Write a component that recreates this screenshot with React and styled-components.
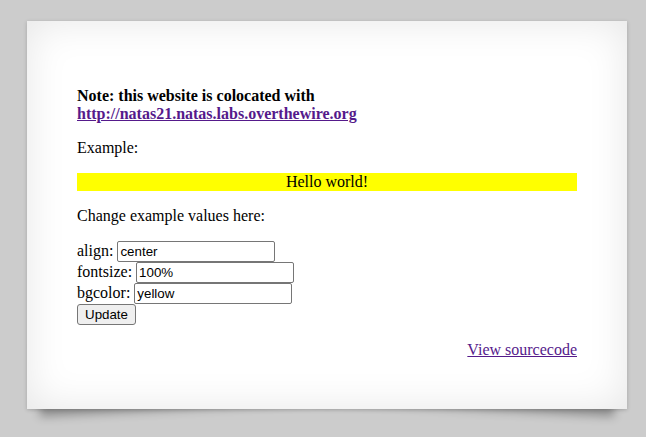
import React from "react";
import styled, { createGlobalStyle } from "styled-components";

const Global = createGlobalStyle`
  html { margin: 0; padding: 0; background: #ccc; }
  body {
    margin: 0;
    padding: 0;
    font-family: "Liberation Serif", "Times New Roman", serif;
    font-size: 16px;
    color: #000;
  }
`;

const Page = styled.div`
  padding: 21px 19px 28px 27px;
`;

const Card = styled.div`
  position: relative;
  width: 600px;
  box-sizing: border-box;
  background: #fff;
  padding: 50px;
  box-shadow: 0 1px 4px rgba(0, 0, 0, 0.2), 0 0 40px rgba(0, 0, 0, 0.1) inset;

  &::before,
  &::after {
    content: "";
    position: absolute;
    z-index: -1;
    bottom: 15px;
    width: 50%;
    height: 20%;
    max-width: 300px;
    box-shadow: 0 15px 10px rgba(0, 0, 0, 0.3);
  }
  &::before {
    left: 10px;
    transform: rotate(-3deg);
  }
  &::after {
    right: 10px;
    transform: rotate(3deg);
  }
`;

const Para = styled.p`
  margin: 16px 0;
  line-height: 18px;
  text-align: ${(p) => p.$align || "left"};
  &:last-child { margin-bottom: 0; }
`;

const Link = styled.a`
  color: #551a8b;
  text-decoration: underline;
`;

const Sample = styled.div`
  background: yellow;
  text-align: center;
  font-size: 100%;
  line-height: 18px;
  margin: 16px 0;
`;

const Form = styled.form`
  margin: 16px 0;
  display: flex;
  flex-direction: column;
  align-items: flex-start;
`;

const Row = styled.label`
  display: flex;
  align-items: baseline;
  gap: 4px;
  height: 21px;
  line-height: 18px;
`;

const Input = styled.input`
  box-sizing: border-box;
  width: 158px;
  height: 21px;
  padding: 1px 2px;
  border: 1px solid #767676;
  border-radius: 2px;
  font-family: "Liberation Sans", Arial, sans-serif;
  font-size: 13.333px;
  color: #000;
  background: #fff;
  outline: none;
`;

const Button = styled.button`
  box-sizing: border-box;
  width: 59px;
  height: 21px;
  padding: 1px 6px;
  border: 1px solid #767676;
  border-radius: 3px;
  background: #efefef;
  font-family: "Liberation Sans", Arial, sans-serif;
  font-size: 13.333px;
  color: #000;
`;

export default function App() {
  return (
    <>
      <Global />
      <Page>
        <Card>
          <Para>
            <b>Note: this website is colocated with</b>
            <br />
            <b>
              <Link href="#">http://natas21.natas.labs.overthewire.org</Link>
            </b>
          </Para>
          <Para>Example:</Para>
          <Sample>Hello world!</Sample>
          <Para>Change example values here:</Para>
          <Form onSubmit={(e) => e.preventDefault()}>
            <Row>
              align:
              <Input defaultValue="center" />
            </Row>
            <Row>
              fontsize:
              <Input defaultValue="100%" />
            </Row>
            <Row>
              bgcolor:
              <Input defaultValue="yellow" />
            </Row>
            <Button type="submit">Update</Button>
          </Form>
          <Para $align="right">
            <Link href="#">View sourcecode</Link>
          </Para>
        </Card>
      </Page>
    </>
  );
}
